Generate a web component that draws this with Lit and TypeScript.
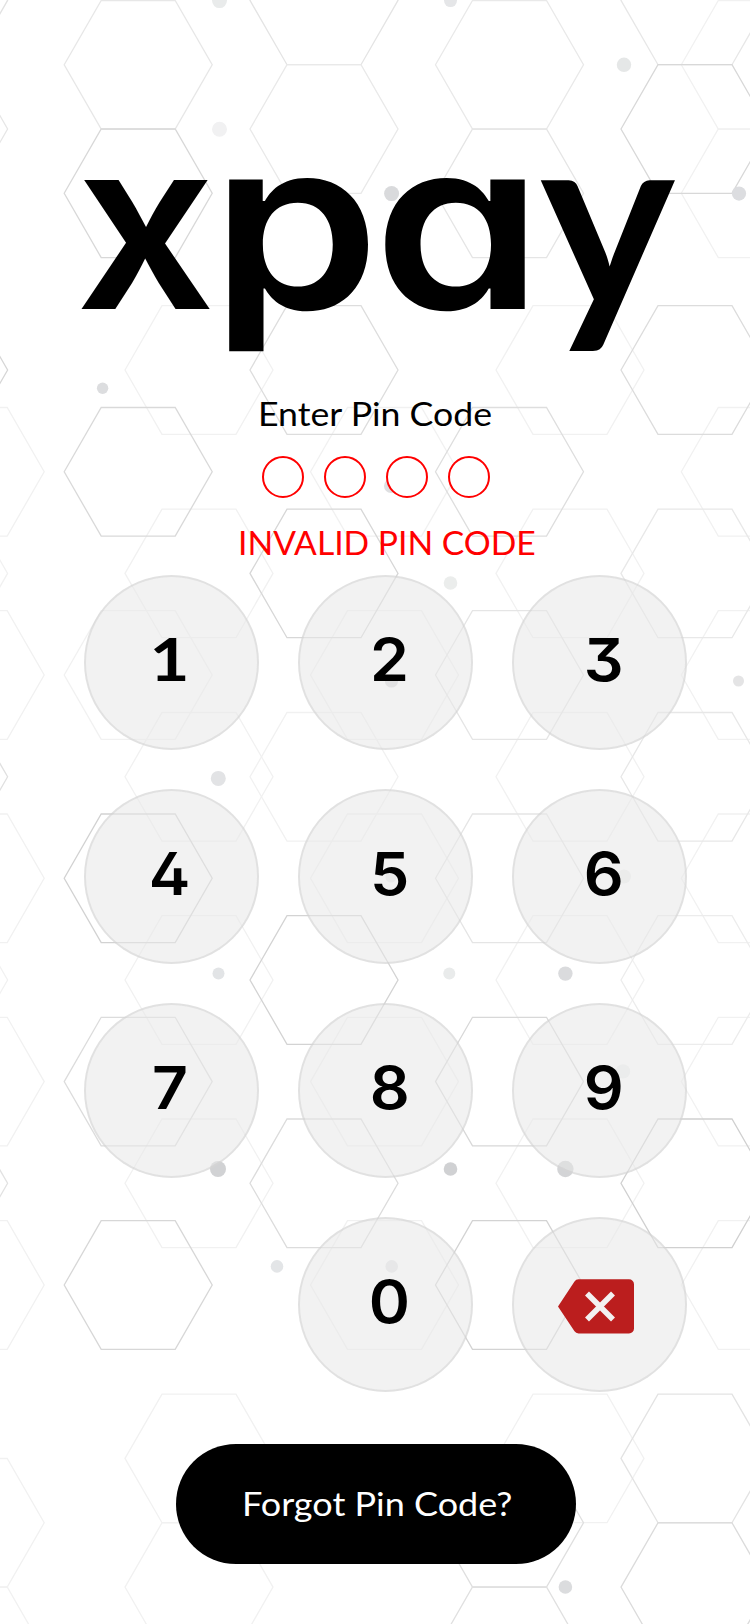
import { LitElement, html, svg, css } from "lit";
import { customElement, property } from "lit/decorators.js";

type Hex = [number, number, string];
type Dot = [number, number, number, string];

const A = 138.2, B = 324, C = 509.5, D = 695, Z = -66.4;
const F = 199, G = 570, L = -29.8, M = 384.5, E = 755.3;
const faint = "#f1f1f1";

const row = (y: number, xs: number[], color = faint): Hex[] => xs.map((x) => [x, y, color]);

const HEXES: Hex[] = [
  ...row(64.8, [E]), ...row(193.3, [E]),
  ...row(370, [F, G]),
  ...row(471.8, [L, M, E]),
  ...row(573.4, [Z, F, G]),
  ...row(675, [L, A, M, E]),
  ...row(776.8, [F, B, G]),
  ...row(878.3, [L, M, E]),
  ...row(980, [Z, F, G]),
  ...row(1081.6, [L, M, E]),
  ...row(1183.3, [F, G]),
  ...row(1285, [L, M, E]),
  ...row(1458.4, [F, G]),
  ...row(1522.8, [L]), ...row(1587.1, [F]), ...row(1651.3, [L]),
  [Z, 0.4, "#e2e2e2"], [Z, 129, "#e6e6e6"], [A, 64.8, "#e7e7e7"], [A, 193.3, "#d8d8d8"],
  [B, 0.4, "#e4e4e4"], [B, 129, "#e9e9e9"], [C, 64.8, "#e9e9e9"], [C, 193.3, "#e5e5e5"],
  [D, 0.4, "#e7e7e7"], [D, 129, "#d8d8d8"],
  [Z, 370, "#d6d6d6"], [B, 370, "#dddddd"], [D, 370, "#dcdcdc"],
  [A, 471.8, "#d9d9d9"], [C, 471.8, "#dedede"],
  [B, 573.4, "#d7d7d7"], [D, 573.4, "#e8e8e8"],
  [C, 675, "#e5e5e5"],
  [Z, 776.8, "#e0e0e0"], [D, 776.8, "#e7e7e7"],
  [A, 878.3, "#d2d2d2"], [C, 878.3, "#e5e5e5"],
  [B, 980, "#d3d3d3"], [D, 980, "#ececec"],
  [A, 1081.6, "#dcdcdc"], [C, 1081.6, "#d8d8d8"],
  [Z, 1183.3, "#e2e2e2"], [B, 1183.3, "#dcdcdc"], [D, 1183.3, "#d0d0d0"],
  [A, 1285, "#d7d7d7"], [C, 1285, "#d3d3d3"],
  [D, 1458.4, "#e3e3e3"], [C, 1522.8, "#dfdfdf"],
  [D, 1587.1, "#dbdbdb"], [C, 1651.3, "#e0e0e0"],
];

const DOTS: Dot[] = [
  [219.5, 0.6, 7.5, "#e9ebeb"], [450.5, 0.6, 6.5, "#e5e6e8"], [624, 64.8, 7.2, "#e5e7e7"],
  [219.5, 129.3, 7.5, "#f1f1f2"], [391.6, 193.6, 7.5, "#d9dadc"], [739, 193.6, 7.1, "#dcdde0"],
  [102.6, 388.3, 5.7, "#dcdddf"], [391, 486, 7, "#dedfe1"], [450.5, 583, 6.8, "#ebedec"],
  [391.5, 681, 6.6, "#dadadc"], [738.5, 681, 5.5, "#e4e4e5"], [218.3, 778.4, 7.5, "#e2e3e5"],
  [391, 877, 5.6, "#eaecec"], [624, 876.5, 7, "#eff1f0"], [218.5, 973.6, 6, "#e2e4e6"],
  [449.3, 973.6, 6, "#e9ebeb"], [565.4, 973.6, 7.2, "#dadbdd"], [623, 1071.4, 7.2, "#f0f2f1"],
  [218, 1169, 8, "#d1d2d4"], [450.5, 1169, 6.8, "#d0d1d3"], [565.4, 1169, 8.2, "#d3d4d6"],
  [277, 1266.4, 6.3, "#e3e5e7"], [391.7, 1266.4, 6.3, "#e6e7e9"], [565.4, 1587, 6.8, "#dbdcde"],
];

const hexPoints = (x: number, y: number) =>
  [[-74, 0], [-37, -64.3], [37, -64.3], [74, 0], [37, 64.3], [-37, 64.3]]
    .map(([dx, dy]) => `${x + dx},${y + dy}`)
    .join(" ");

@customElement("hex-backdrop")
class HexBackdrop extends LitElement {
  static styles = css`
    :host { position: absolute; inset: 0; display: block; }
    .art { display: block; width: 750px; height: 1624px; }
    .hex { fill: none; stroke-width: 1.3; }
  `;
  render() {
    return html`<svg class="art" viewBox="0 0 750 1624" aria-hidden="true">
      ${HEXES.map(([x, y, c]) => svg`<polygon class="hex" points=${hexPoints(x, y)} stroke=${c}></polygon>`)}
      ${DOTS.map(([x, y, r, c]) => svg`<circle cx=${x} cy=${y} r=${r} fill=${c}></circle>`)}
    </svg>`;
  }
}

@customElement("xpay-logo")
class XpayLogo extends LitElement {
  static styles = css`
    :host { display: block; }
    .mark { display: block; width: 750px; height: 384px; }
    .round { fill: #000; font-family: Inter, sans-serif; font-weight: 600; font-size: 237px; font-feature-settings: "cv11"; }
    .plain { fill: #000; font-family: Lato, sans-serif; font-weight: 700; font-size: 251px; }
  `;
  render() {
    return html`<svg class="mark" viewBox="0 0 750 384" role="img" aria-label="xpay">
      <defs><clipPath id="descender"><rect x="0" y="0" width="750" height="351.3"></rect></clipPath></defs>
      <text class="round" transform="translate(75.5 309) scale(1.04 1)">x</text>
      <g clip-path="url(#descender)"><text class="round" transform="translate(211 309) scale(1.14 1)">p</text></g>
      <text class="round" transform="translate(373.5 309) scale(1.145 1)">a</text>
      <text class="plain" transform="translate(540 309) scale(1.02 1)">y</text>
    </svg>`;
  }
}

@customElement("pin-key")
class PinKey extends LitElement {
  @property() label = "";
  static styles = css`
    :host { display: block; }
    .key {
      box-sizing: border-box; width: 175px; height: 175px; padding: 0; margin: 0;
      display: flex; align-items: center; justify-content: center;
      border-radius: 50%; border: 2px solid rgba(195, 195, 195, 0.35);
      background: rgba(231, 231, 231, 0.55);
      font: 600 59px/60px Inter, sans-serif; color: #000;
      font-feature-settings: "cv09", "cv02";
    }
    .digit { display: block; margin: 0 0 6px var(--nudge, 9px); transform: scaleX(1.06); }
    .slab { font: 700 60px/60px Lato, sans-serif; margin-bottom: 10px; margin-left: -3px; transform: scaleX(1.15); }
    .icon { display: block; width: 76px; height: 55px; margin: 3px 0 0 -7px; }
  `;
  render() {
    return html`<button class="key" aria-label=${this.label || "Delete"}>
      ${this.label
        ? html`<span class="digit ${this.label === "1" ? "slab" : ""}">${this.label}</span>`
        : html`<svg class="icon" viewBox="0 0 76 55">
            <path fill="#bb1e1e" d="M20.5 0.3H71a5 5 0 0 1 5 5V49.5a5 5 0 0 1-5 5H20.5a5 5 0 0 1-4-2.2L0 27.4 16.5 2.5a5 5 0 0 1 4-2.2Z"></path>
            <path fill="none" stroke="#f3f1f1" stroke-width="5.6" d="M29 14.4 55 40.4M55 14.4 29 40.4"></path>
          </svg>`}
    </button>`;
  }
}

@customElement("app-root")
class AppRoot extends LitElement {
  static styles = css`
    :host {
      display: block; position: relative; width: 750px; height: 1624px;
      overflow: hidden; background: #fff; font-family: Lato, sans-serif;
    }
    .screen { position: relative; display: flex; flex-direction: column; height: 1624px; }
    .title, .error { width: max-content; font-size: 32px; line-height: 40px; height: 40px; white-space: nowrap; transform-origin: 0 50%; }
    .title { margin: 10px 0 0 257.5px; transform: scaleX(1.115); }
    .pins { display: flex; gap: 20px; margin: 22px 0 0 262px; }
    .pin { box-sizing: border-box; width: 42px; height: 42px; border: 2px solid #f00; border-radius: 50%; background: #fff; }
    .error { margin: 24.5px 0 0 237.5px; color: #f00; transform: scaleX(1.052); }
    .pad { display: grid; grid-template-columns: repeat(3, 175px); gap: 39px; margin: 12.9px 0 0 83.5px; }
    .first { --nudge: -2px; }
    .zero { grid-column: 2; }
    .forgot {
      display: flex; align-items: center; justify-content: center;
      width: 400px; height: 120px; margin: 51.6px 0 0 176px; padding: 1px 0 0 3px; border: 0; border-radius: 60px;
      background: #000; color: #fff; font: 400 32px/40px Lato, sans-serif; white-space: nowrap;
    }
    .ask { transform: scaleX(1.125); }
  `;
  render() {
    return html`
      <hex-backdrop></hex-backdrop>
      <main class="screen">
        <xpay-logo></xpay-logo>
        <div class="title">Enter Pin Code</div>
        <div class="pins">${[0, 1, 2, 3].map(() => html`<span class="pin"></span>`)}</div>
        <div class="error">INVALID PIN CODE</div>
        <div class="pad">
          ${["1", "2", "3", "4", "5", "6", "7", "8", "9"].map(
            (d, i) => html`<pin-key class=${i % 3 === 0 ? "first" : "rest"} label=${d}></pin-key>`
          )}
          <pin-key class="zero" label="0"></pin-key>
          <pin-key></pin-key>
        </div>
        <button class="forgot"><span class="ask">Forgot Pin Code?</span></button>
      </main>
    `;
  }
}
